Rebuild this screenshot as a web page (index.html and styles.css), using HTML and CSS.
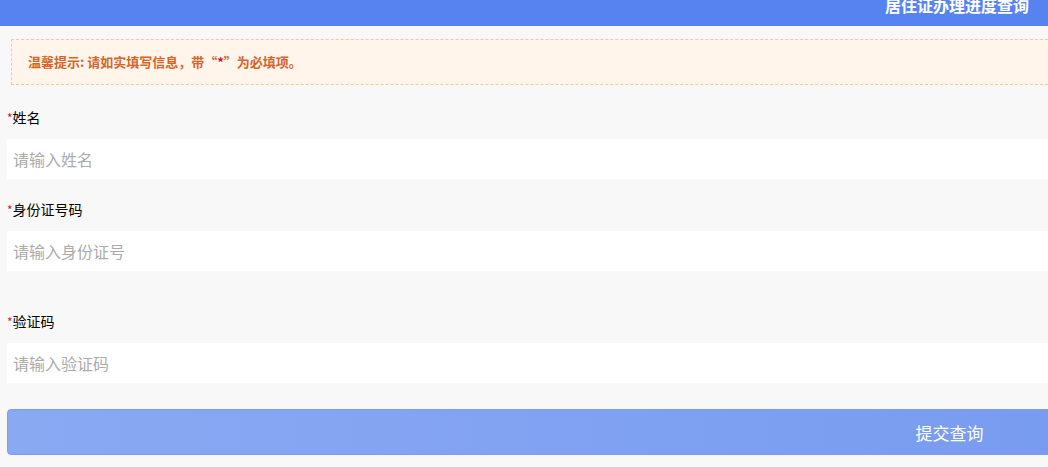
FILE: index.html
```html
<!DOCTYPE html>
<html lang="zh">
<head>
<meta charset="utf-8">
<title>居住证办理进度查询</title>
<link rel="stylesheet" href="styles.css">
</head>
<body>
<div class="page">
  <header class="header"><h1 class="title">居住证办理进度查询</h1></header>
  <main class="main">
    <div class="notice">温馨提示: 请如实填写信息，带“<span class="star">*</span>”为必填项。</div>
    <div class="field field-first">
      <label class="label"><span class="star">*</span>姓名</label>
      <input class="input" type="text" placeholder="请输入姓名">
    </div>
    <div class="field">
      <label class="label"><span class="star">*</span>身份证号码</label>
      <input class="input" type="text" placeholder="请输入身份证号">
    </div>
    <div class="field field-wide">
      <label class="label"><span class="star">*</span>验证码</label>
      <input class="input" type="text" placeholder="请输入验证码">
    </div>
    <button class="submit" type="button">提交查询</button>
  </main>
</div>
</body>
</html>
```

FILE: styles.css
```css
html, body {
  margin: 0;
  padding: 0;
  overflow: hidden;
  background: #f8f8f8;
}
body {
  font-family: "Noto Sans CJK SC", "Noto Sans", sans-serif;
}
.page {
  width: 1914px;
}
.header {
  height: 26px;
  background: #5683f0;
  overflow: hidden;
}
.title {
  margin: 0;
  text-align: center;
  color: #ffffff;
  font-size: 16px;
  font-weight: bold;
  line-height: 10px;
}
.main {
  padding: 0 22px 0 7px;
}
.notice {
  margin: 13px 0 0 4px;
  height: 44px;
  line-height: 44px;
  border: 1px dashed #f0c99e;
  background: #fff5ea;
  padding-left: 16px;
  color: #d3652c;
  font-size: 13px;
  font-weight: bold;
}
.star {
  color: #e0102a;
}
.field {
  display: flex;
  flex-direction: column;
  margin-top: 20px;
}
.field-first {
  margin-top: 22px;
}
.field-wide {
  margin-top: 40px;
}
.label {
  font-size: 14px;
  line-height: 20px;
  color: #000;
  margin-bottom: 11px;
}
.label .star {
  font-size: 12px;
}
.input {
  height: 40px;
  border: none;
  outline: none;
  background: #ffffff;
  padding: 0 6px;
  font-family: inherit;
  font-size: 16px;
  color: #333;
}
.input::placeholder {
  color: #ababab;
}
.submit {
  display: block;
  width: 100%;
  height: 46px;
  margin-top: 26px;
  border: 1px solid #7b9ded;
  border-radius: 4px;
  background: linear-gradient(to right, #8aa9f3, #6a91ee);
  color: #ffffff;
  font-family: inherit;
  font-size: 17px;
  cursor: pointer;
}
```
